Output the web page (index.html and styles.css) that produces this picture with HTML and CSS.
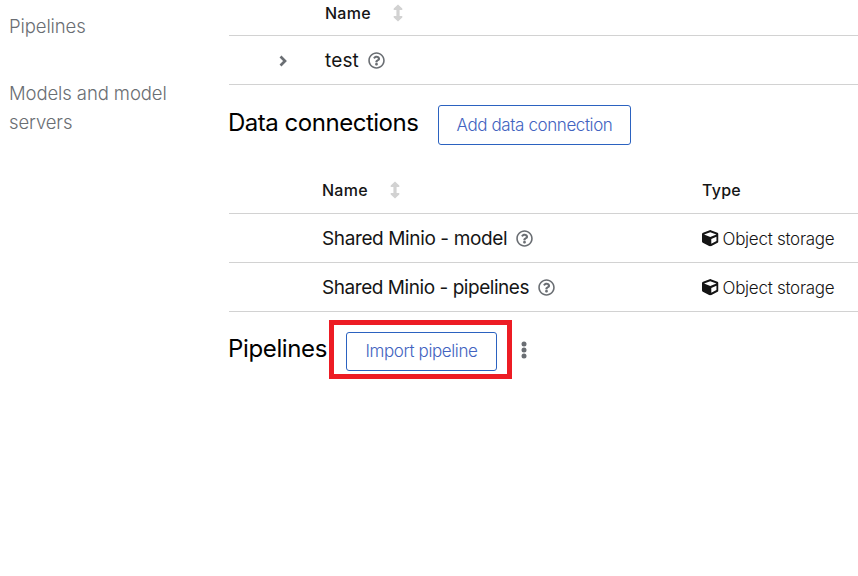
FILE: index.html
```html
<!DOCTYPE html>
<html lang="en">
<head>
<meta charset="utf-8">
<title>Project details</title>
<link rel="stylesheet" href="styles.css">
</head>
<body>
<svg class="symbols" aria-hidden="true">
  <symbol id="sort" viewBox="0 0 10 18"><path d="M5 .5 9.300 4.500V6H6.600v6h2.700v1.500L5 17.500.7 13.500V12h2.700V6H.7V4.500z"/></symbol>
  <symbol id="help" viewBox="0 0 512 512"><path d="M256 8C119 8 8 119 8 256s111 248 248 248 248-111 248-248S393 8 256 8zm0 448c-110.500 0-200-89.400-200-200 0-110.500 89.500-200 200-200 110.500 0 200 89.500 200 200 0 110.500-89.400 200-200 200zm107.200-255.200c0 67.100-72.400 68.100-72.400 92.900V300c0 6.600-5.400 12-12 12h-45.600c-6.600 0-12-5.400-12-12v-8.700c0-35.700 27.100-50 47.600-61.500 17.600-9.800 28.300-16.500 28.300-29.600 0-17.200-22-28.700-39.800-28.700-23.200 0-33.900 11-49 30-4.100 5.100-11.500 6.100-16.700 2.100l-27.800-21.100c-5.100-3.900-6.300-11.100-2.600-16.400C184.800 131.500 214.900 112 261.800 112c49.100 0 101.500 38.300 101.500 88.800zM298 368c0 23.200-18.800 42-42 42s-42-18.800-42-42 18.800-42 42-42 42 18.800 42 42z"/></symbol>
  <symbol id="cube" viewBox="0 0 512 512"><path d="M239.100 6.300l-208 78c-18.700 7-31.100 25-31.100 45v225.100c0 18.200 10.300 34.800 26.500 42.900l208 104c13.500 6.800 29.400 6.800 42.900 0l208-104c16.300-8.100 26.500-24.800 26.500-42.900V129.300c0-20-12.400-37.900-31.100-44.900l-208-78C262 2.200 250 2.200 239.100 6.300zM256 68.400l192 72v1.100l-192 78-192-78v-1.100l192-72zm32 356V275.500l160-65v133.900l-160 80z"/></symbol>
</svg>
<div class="page">
  <nav class="sidebar">
    <a class="jump">Pipelines</a>
    <a class="jump">Models and model servers</a>
  </nav>
  <main class="content">
    <div class="row row-head workbench">
      <span></span><span class="th">Name<svg class="sort"><use href="#sort"/></svg></span>
    </div>
    <div class="row workbench">
      <span class="toggle"><svg class="angle" viewBox="0 0 8 12"><path d="M1.500 1.500 6 6 1.500 10.500"/></svg></span>
      <span class="name"><span class="short">test</span><svg class="help"><use href="#help"/></svg></span>
    </div>
    <div class="section">
      <h2 class="t-data">Data connections</h2>
      <button class="btn btn-add">Add data connection</button>
    </div>
    <div class="row row-head connection">
      <span></span><span class="th">Name<svg class="sort"><use href="#sort"/></svg></span><span class="th">Type</span>
    </div>
    <div class="row connection">
      <span></span><span class="name"><span>Shared Minio - model</span><svg class="help"><use href="#help"/></svg></span>
      <span class="type"><svg class="cube"><use href="#cube"/></svg><span>Object storage</span></span>
    </div>
    <div class="row connection">
      <span></span><span class="name"><span class="long">Shared Minio - pipelines</span><svg class="help"><use href="#help"/></svg></span>
      <span class="type"><svg class="cube"><use href="#cube"/></svg><span>Object storage</span></span>
    </div>
    <div class="section pipelines">
      <h2 class="t-pl">Pipelines</h2>
      <div class="highlight"><button class="btn btn-import">Import pipeline</button></div>
      <svg class="kebab" viewBox="0 0 6 18"><circle cx="3" cy="3" r="2.500"/><circle cx="3" cy="9" r="2.500"/><circle cx="3" cy="15" r="2.500"/></svg>
    </div>
  </main>
</div>
</body>
</html>
```
FILE: styles.css
```css
* { box-sizing: border-box; }
body { margin: 0; background: #fff; color: #151515; font-family: "Inter", "Liberation Sans", sans-serif; white-space: nowrap; }
.symbols { display: none; }
.page { display: grid; grid-template-columns: 229px 1fr; height: 576px; overflow: hidden; }
.sidebar { display: flex; flex-direction: column; gap: 38px; padding: 12px 50px 0 9px; }
.jump { color: #6a6e73; font-size: 18.500px; font-weight: 300; line-height: 29px; letter-spacing: -.1px; white-space: normal; }
.row { display: grid; align-items: center; height: 49px; border-bottom: 1px solid #d2d2d2; }
.workbench { grid-template-columns: 96px 1fr; }
.connection { grid-template-columns: 93px 380px 1fr; }
.row-head.workbench { height: 36px; padding-bottom: 9px; }
.row-head.connection { height: 48px; }
.th { display: flex; align-items: center; font-size: 16px; font-weight: 500; letter-spacing: .25px; }
.sort { width: 10px; height: 18px; margin-left: 22.500px; fill: #d2d2d2; }
.toggle { padding: 2px 0 0 50px; line-height: 0; }
.angle { width: 8px; height: 12px; fill: none; stroke: #6a6e73; stroke-width: 2.700px; }
.name { display: flex; align-items: center; font-size: 19px; letter-spacing: -.38px; }
.short { letter-spacing: .15px; }
.long { letter-spacing: -.45px; }
.help { width: 17px; height: 17px; margin-left: 9px; fill: #6a6e73; }
.type { display: flex; align-items: center; gap: 4px; padding-top: 1px; font-size: 17px; font-weight: 300; letter-spacing: -.27px; }
.cube { width: 16.500px; height: 16.500px; fill: #151515; }
.section { display: flex; height: 81px; padding-top: 20px; align-items: flex-start; }
h2 { margin: 0; color: #000; font-size: 24px; font-weight: 400; line-height: 36px; letter-spacing: -.48px; text-indent: -1px; }
.btn { height: 40px; padding: 0; border: 1px solid #2b62c0; border-radius: 3px; background: #fff; color: #4263c0; font: 300 17px "Inter", sans-serif; letter-spacing: -.4px; }
.btn-add { width: 193px; }
.btn-import { width: 151px; height: 39px; padding-bottom: 2px; }
.t-data { width: 209px; }
.t-pl { width: 100px; margin-top: 11px; letter-spacing: -.36px; }
.pipelines { padding-top: 8px; }
.highlight { display: flex; align-items: center; width: 183px; height: 59px; padding: 4px 0 0 12px; border: 5px solid #ed1c24; }
.kebab { width: 6px; height: 18px; margin: 21px 0 0 9px; fill: #6a6e73; }
```
